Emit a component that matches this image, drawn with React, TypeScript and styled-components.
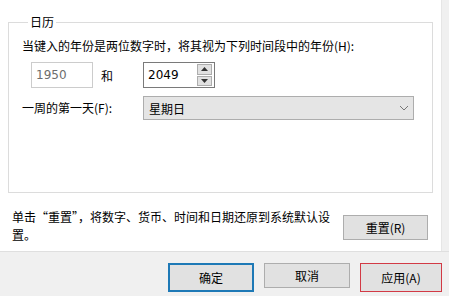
import React from 'react';
import styled, { createGlobalStyle } from 'styled-components';

const GlobalStyle = createGlobalStyle`
  html, body {
    margin: 0;
    padding: 0;
    background: #f0f0f0;
  }
  body {
    font-family: 'Noto Sans CJK SC', 'Noto Sans', sans-serif;
    font-size: 12px;
    color: #000;
  }
`;

const Window = styled.div`
  width: 449px;
  height: 296px;
  display: grid;
  grid-template-rows: 252px 1fr;
  background: #f0f0f0;
  overflow: hidden;
`;

const Top = styled.div`
  display: flex;
  border-bottom: 1px solid #dfdfdf;
`;

const Panel = styled.div`
  width: 441px;
  background: #fff;
  padding: 0 0 0 8px;
  box-sizing: border-box;
  display: flex;
  flex-direction: column;
`;

const SideStrip = styled.div`
  flex: 1;
  background: #f0f0f0;
  border-left: 1px solid #e6e6e6;
`;

const Group = styled.fieldset`
  margin: 14px 0 0 0;
  width: 425px;
  height: 179px;
  box-sizing: border-box;
  border: 1px solid #dcdcdc;
  padding: 0 0 0 13px;
`;

const Legend = styled.legend`
  margin-left: 6px;
  padding: 0 2px;
  line-height: 16px;
`;

const Label = styled.div`
  line-height: 16px;
  white-space: nowrap;
`;

const Row = styled.div<{ $top: number }>`
  display: flex;
  align-items: center;
  margin-top: ${p => p.$top}px;
`;

const YearBox = styled.div<{ $disabled?: boolean; $w: number }>`
  width: ${p => p.$w}px;
  height: 26px;
  box-sizing: border-box;
  border: 1px solid ${p => (p.$disabled ? '#cccccc' : '#7a7a7a')};
  color: ${p => (p.$disabled ? '#6d6d6d' : '#000')};
  font-family: 'DejaVu Sans', 'Noto Sans', sans-serif;
  font-size: 12px;
  display: flex;
  align-items: center;
  padding-left: 4px;
  position: relative;
`;

const Spinner = styled.div`
  position: absolute;
  right: 2px;
  top: 1px;
  bottom: 1px;
  width: 15px;
  display: flex;
  flex-direction: column;
  gap: 1px;
`;

const SpinBtn = styled.div`
  flex: 1;
  background: #e1e1e1;
  border: 1px solid #adadad;
  display: flex;
  align-items: center;
  justify-content: center;
`;

const And = styled.span`
  margin: 0 30px 0 8px;
`;

const Select = styled.div`
  width: 271px;
  height: 24px;
  box-sizing: border-box;
  background: #e5e5e5;
  border: 1px solid #adadad;
  display: flex;
  align-items: center;
  justify-content: space-between;
  padding: 0 4px 0 5px;
`;

const Footer = styled.div`
  display: flex;
  align-items: flex-start;
  justify-content: space-between;
  margin-top: 15px;
  padding-left: 4px;
  width: 416px;
`;

const Note = styled.div`
  width: 318px;
  line-height: 18px;
`;

const Button = styled.button<{ $w?: number; $variant?: 'default' | 'marked' }>`
  width: ${p => p.$w ?? 86}px;
  height: ${p => (p.$variant ? 29 : 25)}px;
  box-sizing: border-box;
  background: #e1e1e1;
  border: ${p =>
    p.$variant === 'default'
      ? '2px solid #1e79b6'
      : p.$variant === 'marked'
      ? '1px solid #d23a45'
      : '1px solid #adadad'};
  font-family: 'Noto Sans CJK SC', 'Noto Sans', sans-serif;
  font-size: 12px;
  color: #000;
  padding: 0;
  margin: 0;
`;

const Actions = styled.div`
  display: flex;
  gap: 10px;
  padding: 11px 0 0 168px;
`;

const Arrow = ({ up }: { up?: boolean }) => (
  <svg width="7" height="4" viewBox="0 0 7 4">
    <path d={up ? 'M0 4 L3.5 0 L7 4 Z' : 'M0 0 L3.5 4 L7 0 Z'} fill="#333" />
  </svg>
);

const Chevron = () => (
  <svg width="10" height="6" viewBox="0 0 10 6">
    <path d="M1 1 L5 5 L9 1" fill="none" stroke="#777" strokeWidth="1" />
  </svg>
);

const App: React.FC = () => {
  return (
    <Window>
      <GlobalStyle />
      <Top>
        <Panel>
          <Group>
            <Legend>日历</Legend>
            <Label style={{ marginTop: 8 }}>当键入的年份是两位数字时，将其视为下列时间段中的年份(H):</Label>
            <Row $top={8} style={{ paddingLeft: 9 }}>
              <YearBox $disabled $w={62}>1950</YearBox>
              <And>和</And>
              <YearBox $w={72}>
                2049
                <Spinner>
                  <SpinBtn><Arrow up /></SpinBtn>
                  <SpinBtn><Arrow /></SpinBtn>
                </Spinner>
              </YearBox>
            </Row>
            <Row $top={8}>
              <Label style={{ width: 121 }}>一周的第一天(F):</Label>
              <Select>
                <span>星期日</span>
                <Chevron />
              </Select>
            </Row>
          </Group>
          <Footer>
            <Note>单击“重置”，将数字、货币、时间和日期还原到系统默认设置。</Note>
            <Button $w={85} style={{ marginTop: 7 }}>重置(R)</Button>
          </Footer>
        </Panel>
        <SideStrip />
      </Top>
      <Actions>
        <Button $variant="default">确定</Button>
        <Button>取消</Button>
        <Button $w={82} $variant="marked">应用(A)</Button>
      </Actions>
    </Window>
  );
};

export default App;
